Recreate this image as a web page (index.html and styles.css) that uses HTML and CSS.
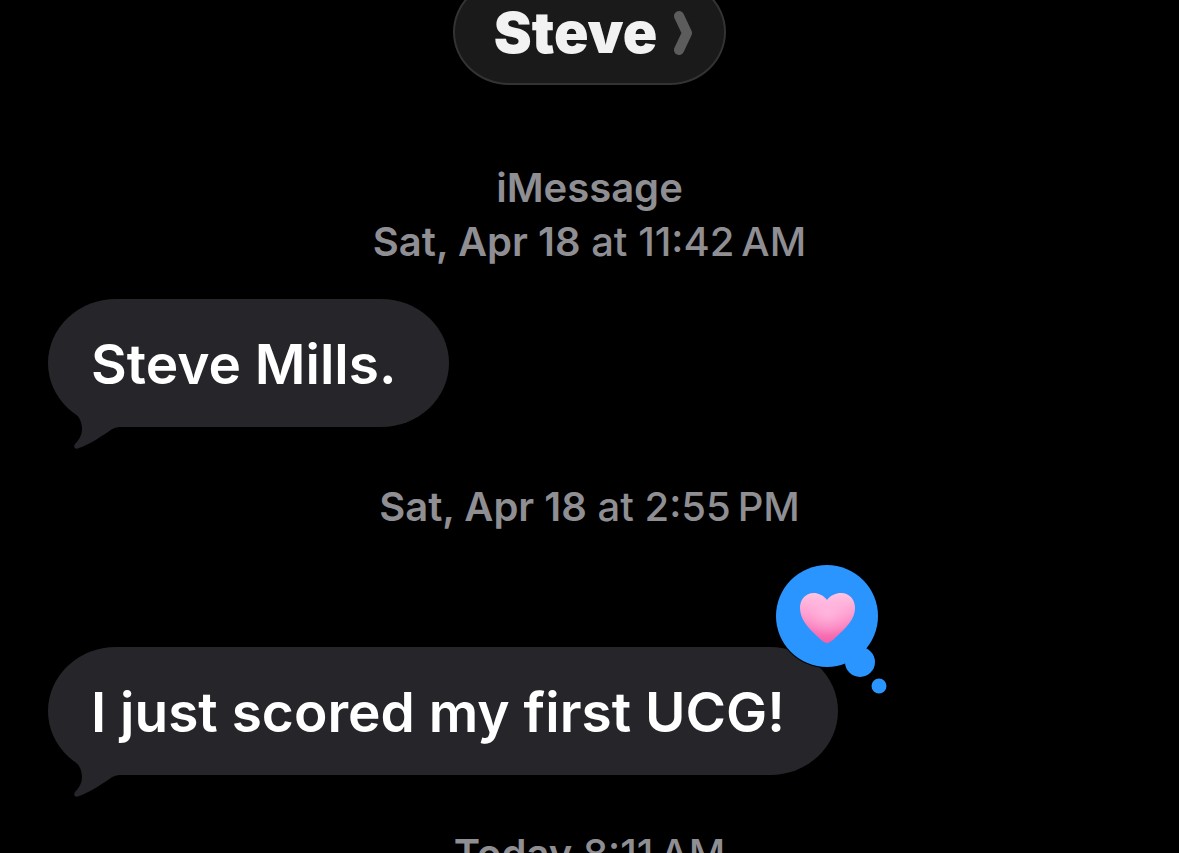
FILE: index.html
```
<!DOCTYPE html>
<html lang="en">
<head>
    <meta charset="UTF-8">
    <meta name="viewport" content="width=device-width, initial-scale=1.0">
    <title>Steve</title>
    <link rel="stylesheet" href="styles.css">
</head>
<body>
    <header class="header">
        <button class="contact" type="button">
            Steve
            <svg class="contact_arrow" width="20" height="46" viewBox="0 0 20 46" aria-hidden="true">
                <path d="M6 6L14 23L6 40" />
            </svg>
        </button>
    </header>

    <main class="chat">
        <p class="stamp"><b>iMessage</b><br><b>Sat, Apr 18</b> at 11:42&#8239;AM</p>

        <div class="bubble">
            <p>Steve Mills.</p>
            <svg class="bubble_tail" width="60" height="50" viewBox="0 0 60 50" aria-hidden="true">
                <path d="M5 12C11 17 14 23 14 30C14 37 10 42 7 45C5 48 7 51 11 49C20 46 31 39 40 33C45 29 48 28 54 28L54 8L5 8Z" />
            </svg>
        </div>

        <p class="stamp"><b>Sat, Apr 18</b> at 2:55&#8239;PM</p>

        <div class="bubble bubble--reacted">
            <p>I just scored my first UCG!</p>
            <svg class="bubble_tail" width="60" height="50" viewBox="0 0 60 50" aria-hidden="true">
                <path d="M5 12C11 17 14 23 14 30C14 37 10 42 7 45C5 48 7 51 11 49C20 46 31 39 40 33C45 29 48 28 54 28L54 8L5 8Z" />
            </svg>
            <!-- heart tapback -->
            <svg class="reaction" width="120" height="140" viewBox="0 0 120 140" role="img" aria-label="Loved">
                <defs>
                    <linearGradient id="heart" x1="0" y1="0" x2="0" y2="1">
                        <stop offset="0" stop-color="#ffc4e3" />
                        <stop offset="0.4" stop-color="#ff9fd0" />
                        <stop offset="1" stop-color="#f45fa8" />
                    </linearGradient>
                    <radialGradient id="shine" cx="0.5" cy="0.4" r="0.45">
                        <stop offset="0" stop-color="#ffbfe4" stop-opacity="0.7" />
                        <stop offset="1" stop-color="#ffbfe4" stop-opacity="0" />
                    </radialGradient>
                </defs>
                <circle cx="55" cy="55" r="52" fill="#000" />
                <g fill="#2b95ff">
                    <circle cx="55" cy="55" r="51" />
                    <circle cx="88" cy="101" r="15" />
                    <circle cx="107" cy="125" r="7.5" />
                </g>
                <path fill="url(#heart)" d="M55 39C59 34 64 32 69 32C78 32 83 39 83 47C83 58 74 67 64 76C60 80 57 82 55 82C53 82 50 80 46 76C36 67 28 58 28 47C28 39 33 32 42 32C46 32 51 34 55 39Z" />
                <path fill="url(#shine)" d="M55 39C59 34 64 32 69 32C78 32 83 39 83 47C83 58 74 67 64 76C60 80 57 82 55 82C53 82 50 80 46 76C36 67 28 58 28 47C28 39 33 32 42 32C46 32 51 34 55 39Z" />
            </svg>
        </div>

        <p class="stamp"><b>Today</b> 8:11&#8239;AM</p>
    </main>
</body>
</html>
```
FILE: styles.css
```
*{
    box-sizing: border-box;
    margin: 0;
    padding: 0;
}

body{
    background-color: #000;
    color: #fff;
    font-family: Inter, "Liberation Sans", sans-serif;
    height: 100vh;
    overflow: hidden;
}

.header{
    display: flex;
    justify-content: center;
    /* the pill is scrolled partly under the top edge */
    margin-top: -21px;
}

.contact{
    display: flex;
    align-items: center;
    gap: 16px;
    padding: 17px 31px 15px 39px;
    border: 2px solid #333;
    border-radius: 56px / 53px;
    background-color: #1a1a1a;
    color: #f2f2f2;
    font-family: inherit;
    font-size: 57px;
    font-weight: 900;
    line-height: 70px;
    cursor: pointer;
}

.contact_arrow{
    fill: none;
    stroke: #5c5c5c;
    stroke-width: 10;
    stroke-linecap: round;
    stroke-linejoin: round;
}

.chat{
    display: flex;
    flex-direction: column;
    align-items: flex-start;
    padding: 76px 48px 0;
}

.stamp{
    align-self: center;
    color: #8e8e93;
    font-size: 40px;
    font-weight: 500;
    line-height: 54px;
    text-align: center;
}

.stamp b{
    font-weight: 600;
}

.bubble{
    position: relative;
    margin: 30px 0 53px;
    padding: 30px 53px 28px 43px;
    border-radius: 68px / 64px;
    background-color: #26252a;
    font-size: 55px;
    font-weight: 600;
    line-height: 70px;
}

.bubble--reacted{
    margin-top: 113px;
    margin-bottom: 52px;
}

.bubble_tail{
    position: absolute;
    left: 20px;
    bottom: -22px;
    fill: #26252a;
}

.reaction{
    position: absolute;
    top: -86px;
    right: -54px;
}
```
